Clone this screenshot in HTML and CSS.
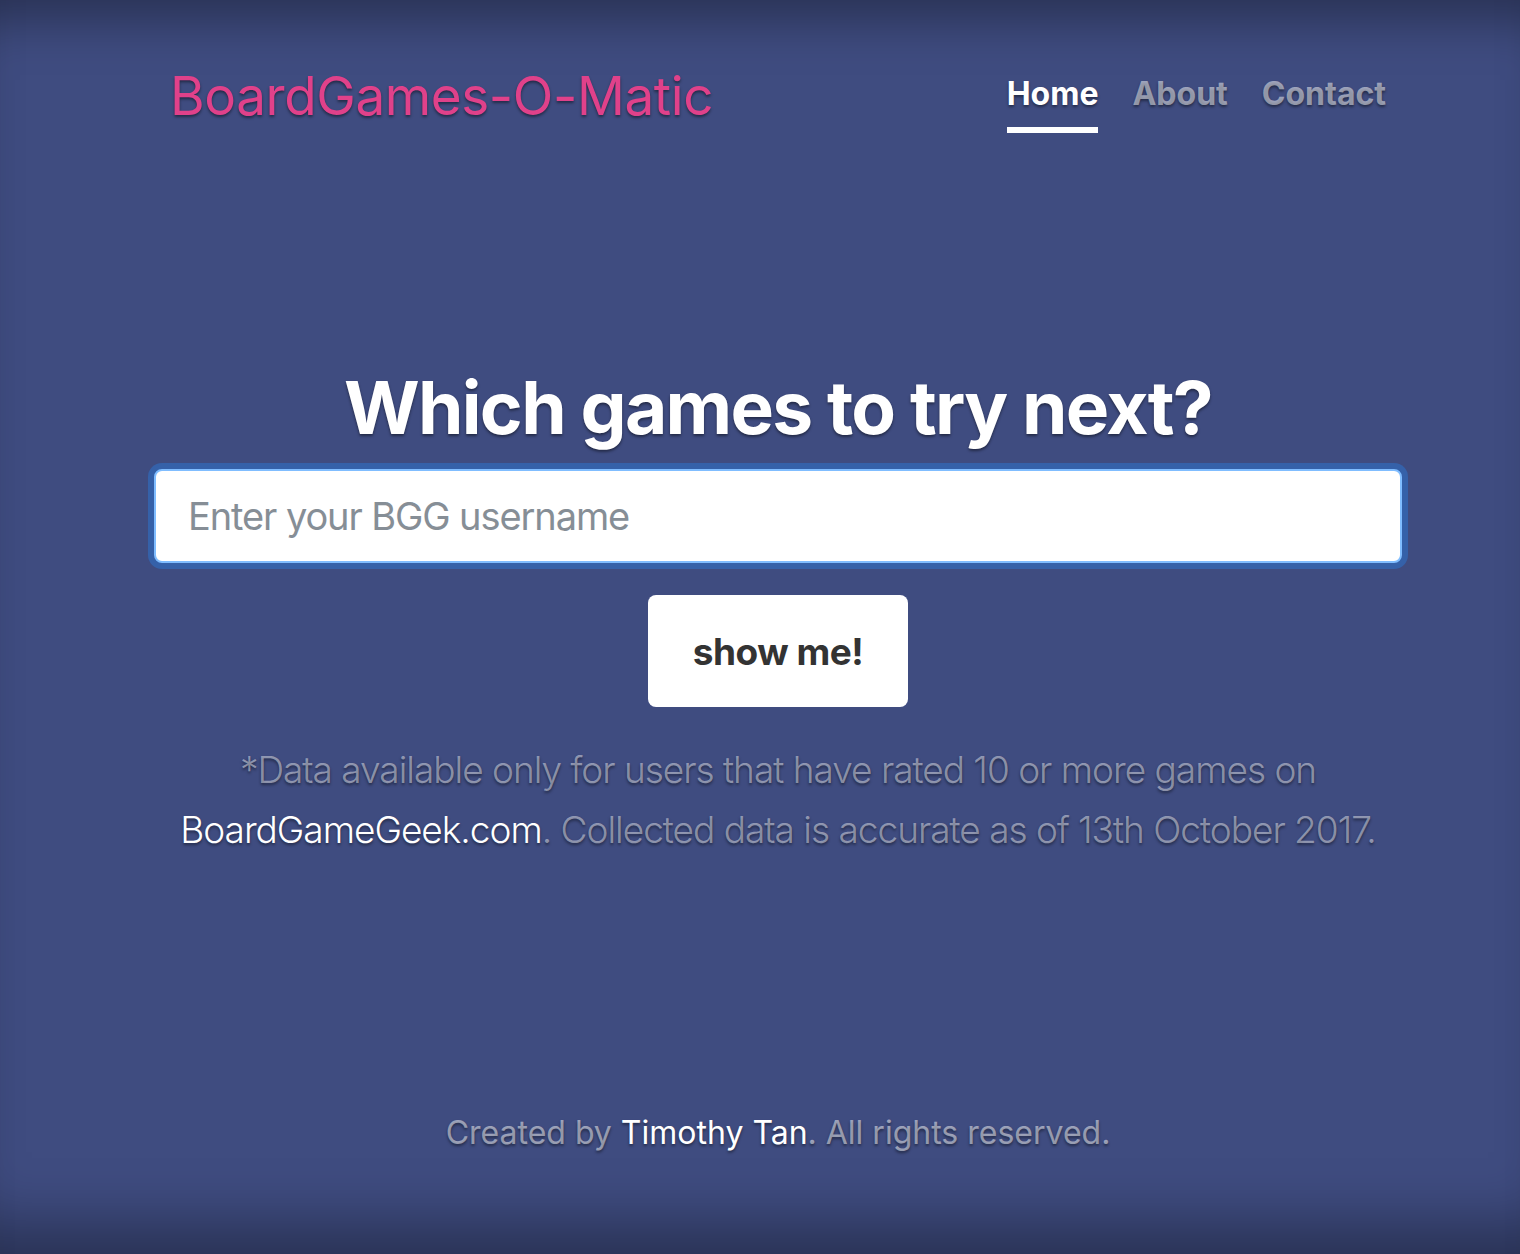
FILE: index.html
```html
<!DOCTYPE html>
<html lang="en">
<head>
<meta charset="utf-8">
<title>BoardGames-O-Matic</title>
<link rel="stylesheet" href="styles.css">
</head>
<body>
<div class="page">
  <div class="cover">
    <header class="masthead">
      <h3 class="brand">BoardGames-O-Matic</h3>
      <nav class="nav">
        <a class="nav-link active" href="#">Home</a>
        <a class="nav-link" href="#">About</a>
        <a class="nav-link" href="#">Contact</a>
      </nav>
    </header>
    <main class="inner">
      <h1 class="title">Which games to try next?</h1>
      <input class="field" type="text" placeholder="Enter your BGG username">
      <button class="btn">show me!</button>
      <p class="lead">*Data available only for users that have rated 10 or more games on <a href="#">BoardGameGeek.com</a>. Collected data is accurate as of 13th October 2017.</p>
    </main>
    <footer class="foot">
      <p>Created by <a href="#">Timothy Tan</a>. All rights reserved.</p>
    </footer>
  </div>
</div>
</body>
</html>
```
FILE: styles.css
```css
html, body {
  margin: 0;
  height: 100%;
}
body {
  background: #3f4c80;
  font-family: Inter, "Noto Sans", sans-serif;
  color: #fff;
}
.page {
  height: 1254px;
  box-sizing: border-box;
  padding-left: 36px;
  box-shadow: inset 0 60px 50px -40px rgba(0,0,0,.35), inset 0 -70px 60px -40px rgba(0,0,0,.35);
  text-shadow: 0 2px 3px rgba(0,0,0,.45);
}
.cover {
  width: 1216px;
  margin: 0 auto;
  height: 100%;
  display: flex;
  flex-direction: column;
}
.masthead {
  display: flex;
  justify-content: space-between;
  align-items: flex-start;
  padding-top: 66px;
}
.brand {
  margin: 0;
  font-size: 53px;
  font-weight: 400;
  line-height: 60px;
  color: #e0418a;
  letter-spacing: -0.4px;
}
.nav {
  display: flex;
  gap: 34px;
  padding-top: 8px;
}
.nav-link {
  font-size: 32px;
  font-weight: 700;
  line-height: 40px;
  color: rgba(255,255,255,.5);
  text-decoration: none;
  padding-bottom: 13px;
  border-bottom: 6px solid transparent;
}
.nav-link.active {
  color: #fff;
  border-bottom-color: #fff;
}
.inner {
  display: flex;
  flex-direction: column;
  align-items: center;
  padding-top: 230px;
}
.title {
  margin: 0 0 16px;
  font-size: 73px;
  font-weight: 700;
  line-height: 90px;
  letter-spacing: -1.7px;
}
.field {
  width: 1248px;
  height: 94px;
  box-sizing: border-box;
  border: 2px solid #80bdff;
  border-radius: 8px;
  box-shadow: 0 0 0 6px #3561a9;
  padding: 0 32px;
  font-family: inherit;
  font-size: 38px;
  color: #495057;
  background: #fff;
  outline: none;
  margin: 0 0 32px;
}
.field::placeholder {
  color: #868e96;
  letter-spacing: -1.1px;
}
.btn {
  width: 260px;
  height: 112px;
  border: 0;
  border-radius: 8px;
  background: #fff;
  color: #333;
  font-family: inherit;
  font-size: 37px;
  font-weight: 700;
  letter-spacing: -0.5px;
  margin-bottom: 33px;
}
.lead {
  margin: 0;
  text-align: center;
  font-size: 37px;
  font-weight: 300;
  line-height: 60px;
  letter-spacing: -1px;
  color: rgba(255,255,255,.45);
}
.lead a, .foot a {
  color: #fff;
  text-decoration: none;
}
.foot {
  margin-top: auto;
  padding-bottom: 101px;
  text-align: center;
}
.foot p {
  margin: 0;
  font-size: 32px;
  line-height: 40px;
  color: rgba(255,255,255,.5);
}
```
